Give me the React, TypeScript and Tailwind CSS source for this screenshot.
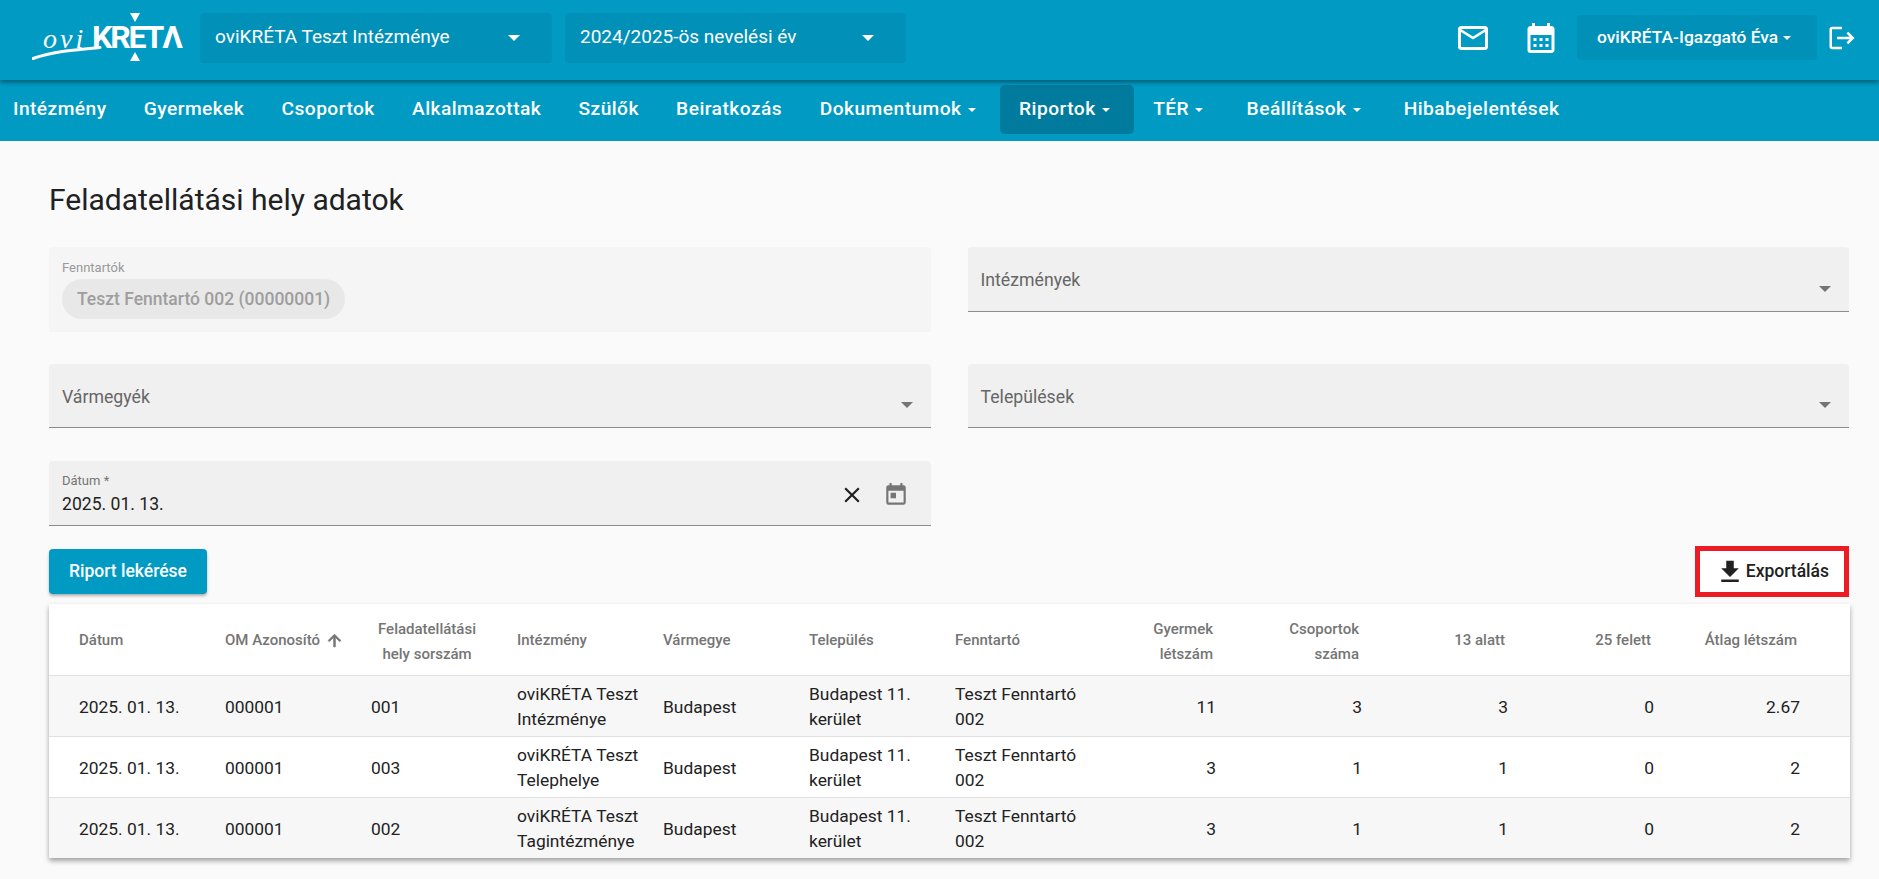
import { MdOutlineMail, MdCalendarMonth, MdLogout, MdClose, MdToday, MdFileDownload } from 'react-icons/md';

const navItems = [
  { label: 'Intézmény' },
  { label: 'Gyermekek' },
  { label: 'Csoportok' },
  { label: 'Alkalmazottak' },
  { label: 'Szülők' },
  { label: 'Beiratkozás' },
  { label: 'Dokumentumok', caret: true },
  { label: 'Riportok', caret: true, active: true },
  { label: 'TÉR', caret: true },
  { label: 'Beállítások', caret: true },
  { label: 'Hibabejelentések' },
];

const rows = [
  { no: '001', name: ['oviKRÉTA Teszt', 'Intézménye'], kids: '11', groups: '3', under: '3', over: '0', avg: '2.67' },
  { no: '003', name: ['oviKRÉTA Teszt', 'Telephelye'], kids: '3', groups: '1', under: '1', over: '0', avg: '2' },
  { no: '002', name: ['oviKRÉTA Teszt', 'Tagintézménye'], kids: '3', groups: '1', under: '1', over: '0', avg: '2' },
];

function Logo() {
  return (
    <svg width="152" height="50" viewBox="0 0 152 50" className="shrink-0" aria-label="oviKRÉTA">
      <polygon points="98,0 108,0 103,9" fill="#fff" />
      <polygon points="98,48 108,48 103,39" fill="#fff" />
      <text x="11" y="35" fontFamily="'Liberation Serif', serif" fontStyle="italic" fontSize="28" letterSpacing="3" fill="#fff">
        ovi
      </text>
      <path d="M1 45.5 C 20 38.5, 45 36.5, 68 34.5" stroke="#fff" strokeWidth="3" fill="none" strokeLinecap="round" />
      <text x="60" y="35" fontFamily="Roboto, sans-serif" fontWeight="700" fontSize="32" letterSpacing="-2.2" fill="#fff">
        KRETΛ
      </text>
    </svg>
  );
}

function Caret({ color = 'border-t-white' }: { color?: string }) {
  return <span className={`inline-block w-0 h-0 border-x-[4px] border-t-[4px] border-x-transparent ${color}`} />;
}

function HeaderSelect({ label, width }: { label: string; width: string }) {
  return (
    <div className={`${width} h-[50px] rounded bg-[#0090b8] flex items-center justify-between pl-[15px] pr-[32px] text-white text-[19px]`}>
      <span>{label}</span>
      <span className="w-0 h-0 border-x-[6px] border-t-[6px] border-x-transparent border-t-white" />
    </div>
  );
}

function SelectField({ label }: { label: string }) {
  return (
    <div className="h-[64px] rounded-t bg-[#f0f0f0] border-b border-[#8c8c8c] relative flex items-center pl-[13px] text-[17.7px] text-[#666]">
      <span className="pt-[3px]">{label}</span>
      <span className="absolute right-[18px] top-[38px] w-0 h-0 border-x-[6px] border-t-[6px] border-x-transparent border-t-[#757575]" />
    </div>
  );
}

export default function App() {
  return (
    <div className="min-h-[879px] bg-[#fafafa] text-[#212121]" style={{ fontFamily: 'Roboto, sans-serif' }}>
      <header className="relative z-10 h-[80px] bg-[#009ac3] shadow-[0_2px_5px_rgba(0,0,0,0.45)] flex items-center pb-[5px]">
        <div className="ml-[32px] mr-[16px]">
          <Logo />
        </div>
        <div className="flex gap-[13px]">
          <HeaderSelect label="oviKRÉTA Teszt Intézménye" width="w-[352px]" />
          <HeaderSelect label="2024/2025-ös nevelési év" width="w-[341px]" />
        </div>
        <div className="ml-auto mr-[22px] flex items-center text-white">
          <MdOutlineMail className="w-[36px] h-[36px]" />
          <MdCalendarMonth className="w-[36px] h-[36px] ml-[32px]" />
          <button className="ml-[18px] w-[240px] h-[45px] rounded bg-[#0090b8] flex items-center pl-[20px] gap-[5px] font-medium text-[17.4px]">
            oviKRÉTA-Igazgató Éva
            <Caret />
          </button>
          <MdLogout className="w-[30px] h-[30px] ml-[10px]" />
        </div>
      </header>

      <nav className="h-[61px] bg-[#009ac3] flex items-start pt-[5px]">
        {navItems.map((item) => (
          <div
            key={item.label}
            className={`h-[49px] first:pl-[13px] rounded-[5px] flex items-center gap-[6px] text-white font-medium text-[19.2px] tracking-[0.45px] ${item.caret ? 'pl-[19px] pr-[24.5px]' : 'px-[18.6px]'} ${item.active ? 'bg-[#007b9d]' : ''}`}
          >
            {item.label}
            {item.caret && <Caret />}
          </div>
        ))}
      </nav>

      <main className="pl-[49px] pr-[29px]">
        <h1 className="pt-[41px] text-[30px] leading-[36px] font-normal">Feladatellátási hely adatok</h1>

        <div className="mt-[29px] mr-[1px] grid grid-cols-2 gap-x-[37px] gap-y-[32px] items-start">
          <div className="h-[85px] rounded-t bg-[#f5f5f5] pl-[13px] pt-[14px]">
            <div className="text-[13px] leading-[14px] text-[#999]">Fenntartók</div>
            <div className="mt-[4px] h-[40px] w-fit rounded-full bg-[#e8e8e8] px-[15px] flex items-center text-[17.5px] font-medium text-[#9e9e9e]">
              Teszt Fenntartó 002 (00000001)
            </div>
          </div>
          <div className="h-[65px] rounded-t bg-[#f0f0f0] border-b border-[#8c8c8c] relative flex items-center pl-[13px] text-[17.7px] text-[#666]">
            <span className="pt-[3px]">Intézmények</span>
            <span className="absolute right-[18px] top-[39px] w-0 h-0 border-x-[6px] border-t-[6px] border-x-transparent border-t-[#757575]" />
          </div>
          <SelectField label="Vármegyék" />
          <SelectField label="Települések" />
        </div>

        <div className="mt-[33px] mr-[1px] grid grid-cols-2 gap-x-[37px]">
          <div className="h-[65px] rounded-t bg-[#f0f0f0] border-b border-[#8c8c8c] flex items-center pl-[13px] pr-[22px]">
            <div className="flex-1 pt-[3px]">
              <div className="text-[13px] leading-[14px] text-[#757575]">Dátum *</div>
              <div className="mt-[4px] text-[17.6px] leading-[24px] text-[#222]">2025. 01. 13.</div>
            </div>
            <MdClose className="w-[26px] h-[26px] mt-[3px] text-[#1f1f1f]" />
            <MdToday className="w-[26px] h-[26px] mt-[3px] ml-[18px] text-[#757575]" />
          </div>
        </div>

        <div className="mt-[20px] mr-[1px] flex items-center justify-between">
          <button className="w-[158px] h-[45px] rounded bg-[#009ac3] text-white text-[17.5px] font-medium shadow-[0_2px_3px_rgba(0,0,0,0.3)]">
            Riport lekérése
          </button>
          <button className="w-[154px] h-[51px] border-[5px] border-[#ed1c24] bg-white flex items-center justify-end pr-[15px] gap-[1px] text-[17.5px] font-medium text-[#212121]">
            <MdFileDownload className="w-[30px] h-[30px] shrink-0" />
            Exportálás
          </button>
        </div>

        <div className="mt-[7px] bg-white shadow-[0_3px_5px_rgba(0,0,0,0.35)]">
          <table className="w-full table-fixed border-collapse">
            <colgroup>
              <col className="w-[176px]" />
              {Array.from({ length: 10 }).map((_, i) => (
                <col key={i} className="w-[146px]" />
              ))}
              <col className="w-[165px]" />
            </colgroup>
            <thead>
              <tr className="h-[71px] border-b border-[#e0e0e0] text-[15px] leading-[25px] font-medium text-[#757575]">
                <th className="pl-[30px] pt-[2px] text-left font-medium">Dátum</th>
                <th className="pt-[2px] text-left font-medium whitespace-nowrap">
                  <span className="inline-flex items-center gap-[5px]">
                    OM Azonosító
                    <svg viewBox="0 0 24 24" className="w-[19px] h-[19px]" fill="currentColor" stroke="currentColor" strokeWidth="1">
                      <path d="M4 12l1.41 1.41L11 7.83V20h2V7.83l5.58 5.59L20 12l-8-8-8 8z" />
                    </svg>
                  </span>
                </th>
                <th className="pr-[34px] pt-[6px] text-center font-medium">
                  Feladatellátási
                  <br />
                  hely sorszám
                </th>
                <th className="pt-[2px] text-left font-medium">Intézmény</th>
                <th className="pt-[2px] text-left font-medium">Vármegye</th>
                <th className="pt-[2px] text-left font-medium">Település</th>
                <th className="pt-[2px] text-left font-medium">Fenntartó</th>
                <th className="pr-[34px] pt-[6px] text-right font-medium">
                  Gyermek
                  <br />
                  létszám
                </th>
                <th className="pr-[34px] pt-[6px] text-right font-medium">
                  Csoportok
                  <br />
                  száma
                </th>
                <th className="pr-[34px] pt-[2px] text-right font-medium">13 alatt</th>
                <th className="pr-[34px] pt-[2px] text-right font-medium">25 felett</th>
                <th className="pr-[53px] pt-[2px] text-right font-medium whitespace-nowrap">Átlag létszám</th>
              </tr>
            </thead>
            <tbody>
              {rows.map((row) => (
                <tr key={row.no} className="h-[61px] border-b border-[#e0e0e0] last:border-b-0 odd:bg-[#f7f7f7] text-[17.4px] leading-[25px] text-[#222] [&>td]:pt-[3px]">
                  <td className="pl-[30px] whitespace-nowrap">2025. 01. 13.</td>
                  <td>000001</td>
                  <td>{row.no}</td>
                  <td className="whitespace-nowrap">
                    {row.name[0]}
                    <br />
                    {row.name[1]}
                  </td>
                  <td>Budapest</td>
                  <td className="whitespace-nowrap">
                    Budapest 11.
                    <br />
                    kerület
                  </td>
                  <td className="whitespace-nowrap">
                    Teszt Fenntartó
                    <br />
                    002
                  </td>
                  <td className="pr-[31px] text-right">{row.kids}</td>
                  <td className="pr-[31px] text-right">{row.groups}</td>
                  <td className="pr-[31px] text-right">{row.under}</td>
                  <td className="pr-[31px] text-right">{row.over}</td>
                  <td className="pr-[50px] text-right">{row.avg}</td>
                </tr>
              ))}
            </tbody>
          </table>
        </div>
      </main>
    </div>
  );
}
